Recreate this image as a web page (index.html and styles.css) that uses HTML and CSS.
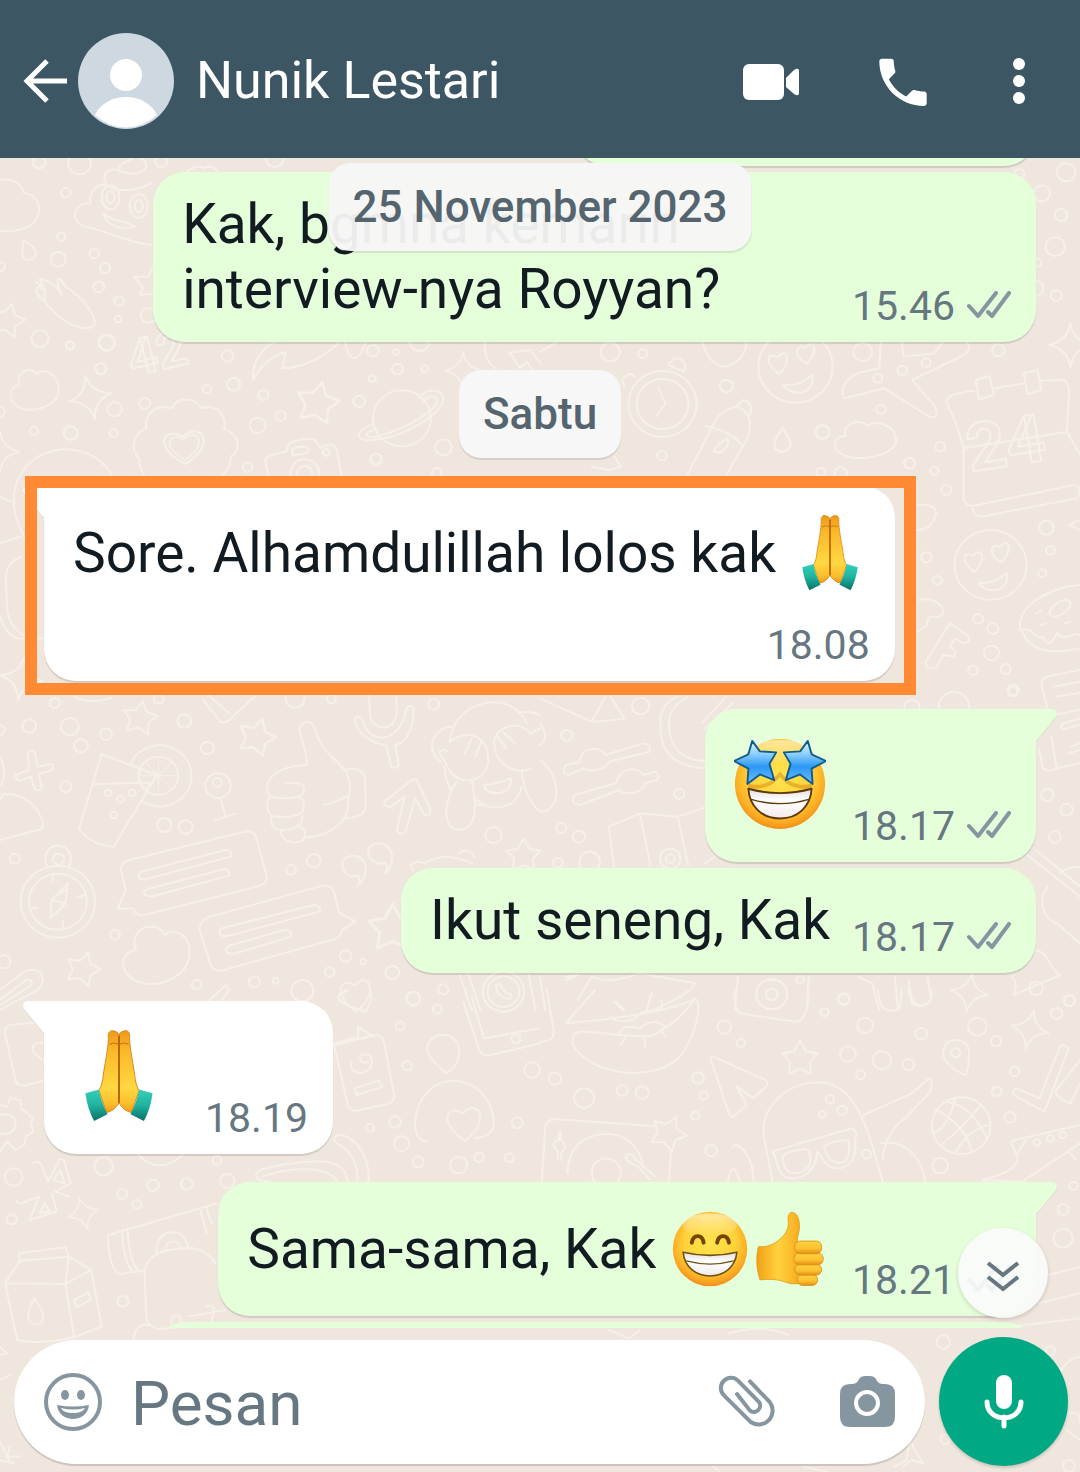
FILE: index.html
```html
<!DOCTYPE html>
<html lang="id">
<head>
    <meta charset="UTF-8">
    <meta name="viewport" content="width=device-width, initial-scale=1.0">
    <title>Nunik Lestari</title>
    <link rel="stylesheet" href="styles.css">
</head>
<body>

<!-- Wallpaper -->
<svg class="wallpaper" viewBox="0 0 1080 1472" preserveAspectRatio="xMinYMin slice" aria-hidden="true">
    <defs>
        <path id="star" d="M0-52L16-22 49-16 27 9 31 42 0 28-31 42-27 9-49-16-16-22Z"/>
        <path id="sparkle" d="M0-66Q8-12 62 0Q8 12 0 66Q-8 12-62 0Q-8-12 0-66Z"/>
        <path id="cloud" d="M-60 45C-100 35-105-15-62-18C-75-60-15-75 0-50C40-75 85-40 82 0C80 40-20 65-60 45Z"/>
        <path id="heart" d="M0 52C-85 0-55-62-5-30C35-78 85-10 0 52Z"/>
        <path id="drop" d="M0-32C22 0 24 10 18 20C8 34-10 34-18 20C-24 8-12-8 0-32Z"/>
        <g id="love-face">
            <circle r="108"/>
            <path d="M-48 22C-95-15-80-45-52-28C-30-60-5-20-48 22ZM34-8C-15-35 5-70 28-55C45-85 75-60 34-8ZM-36 55Q15 60 48 24Q56 70 15 78Q-20 80-36 55Z"/>
        </g>
    </defs>

    <g transform="scale(.3444 .3333)">
        <path d="M-20 690C40 700 100 690 112 640C120 600 90 580 70 580C60 540 20 530-20 545"/>
        <path d="M440 735C380 730 330 700 250 680C200 665 210 610 262 610C255 570 290 550 310 556C290 520 320 500 345 512C345 480 380 490 385 470M345 512C400 535 420 510 425 500C425 480 410 475 400 470M310 556C350 580 400 570 440 550M300 640C330 670 370 660 392 680C350 690 310 680 300 640Z"/>
        <ellipse cx="321" cy="592" rx="26" ry="36"/><ellipse cx="321" cy="592" rx="12" ry="18"/>
        <ellipse cx="403" cy="618" rx="26" ry="36"/><ellipse cx="403" cy="618" rx="12" ry="18"/>
        <path d="M130 905C90 870 105 850 130 870L105 845M130 870L115 838C140 840 160 850 180 885C155 835 170 820 190 860C240 890 290 960 270 980C230 1000 160 950 130 905Z"/>
        <path d="M450 785L430 830 390 830 415 865 405 885 450 880"/>
        <path d="M540 515Q580 490 590 505Q620 490 635 520"/>
        <use href="#star" transform="translate(22 962) rotate(15)"/>
        <use href="#drop" transform="translate(80 750) rotate(-20)"/>
        <circle cx="114" cy="487" r="18"/><circle cx="231" cy="490" r="33"/><circle cx="468" cy="485" r="17"/><circle cx="191" cy="578" r="14"/><circle cx="178" cy="710" r="12"/><circle cx="169" cy="778" r="22"/><circle cx="274" cy="761" r="14"/><circle cx="305" cy="804" r="15"/><circle cx="287" cy="861" r="16"/><circle cx="346" cy="903" r="14"/><circle cx="343" cy="957" r="10"/><circle cx="116" cy="1016" r="25"/><circle cx="203" cy="1036" r="12"/><circle cx="310" cy="1028" r="22"/><circle cx="431" cy="946" r="22"/><circle cx="0" cy="800" r="14"/><circle cx="798" cy="475" r="26"/>
    </g>

    <g transform="translate(540) scale(.3444 .3333)">
        <circle cx="1528" cy="517" r="27"/><circle cx="1457" cy="580" r="24"/><circle cx="1513" cy="645" r="18"/><circle cx="1496" cy="740" r="28"/><circle cx="1444" cy="788" r="12"/><circle cx="1440" cy="865" r="22"/><circle cx="1499" cy="887" r="16"/><circle cx="1392" cy="522" r="14"/>
    </g>

    <g transform="translate(0 340) scale(.3444 .3333)">
        <text class="doodle-number" x="385" y="110" transform="rotate(-14 385 110)">42</text>
        <use href="#cloud" transform="translate(105 155) scale(.8 1.05)"/>
        <use href="#sparkle" transform="translate(262 172) rotate(-12)"/>
        <use href="#sparkle" transform="translate(0 335) scale(.9)"/>
        <use href="#sparkle" transform="translate(1345 92) scale(.85)"/>
        <use href="#sparkle" transform="translate(62 1015) rotate(8)"/>
        <use href="#star" transform="translate(922 190) rotate(12) scale(1.25)"/>
        <path d="M735 120C730 50 780 0 830 0M735 120C760 70 790 50 830 35L820 85C880 85 950 50 1000-10M1000-10C1010 90 1050 60 1065-5"/>
        <path d="M500 205C515 165 570 175 585 205C640 190 660 240 650 265C700 290 700 330 670 350C670 390 650 400 640 410M500 205C440 190 420 230 425 265C380 280 380 340 405 355C400 385 415 395 420 410"/>
        <use href="#heart" transform="translate(538 320) scale(1.15 1)"/>
        <use href="#heart" transform="translate(538 320) scale(.85 .75)"/>
        <circle cx="1167" cy="235" r="84"/>
        <path d="M1085 250C1030 270 1020 310 1100 298C1180 290 1320 200 1280 160C1265 145 1230 150 1218 175M1085 270C1050 280 1060 300 1110 285C1180 265 1290 200 1265 172C1250 165 1240 170 1230 185"/>
        <path d="M780 410L770 360Q775 345 830 335L840 310Q880 290 915 300L930 325Q970 300 978 330L992 410M850 345C840 325 855 320 880 320C900 322 905 335 880 342Z"/>
        <circle cx="885" cy="400" r="42"/><circle cx="885" cy="400" r="22"/><circle cx="947" cy="337" r="10"/>
        <path d="M75 595C0 480 50 340 180 328C260 325 310 370 325 410M0 470L45 490M0 610L60 590M60 650C0 680 20 720 20 800C25 860 60 900 125 895M0 830C20 890 50 900 70 895"/>
        <path d="M1480 38L1540 30 1570 70M1480 38L1510 85 1530 65 1545 90M1410 0Q1400 60 1440 85"/>
        <circle cx="203" cy="17" r="12"/><circle cx="310" cy="8" r="24"/><circle cx="293" cy="86" r="16"/><circle cx="333" cy="208" r="21"/><circle cx="420" cy="190" r="16"/><circle cx="205" cy="279" r="20"/><circle cx="330" cy="279" r="12"/><circle cx="99" cy="273" r="12"/><circle cx="0" cy="215" r="14"/><circle cx="601" cy="147" r="12"/><circle cx="678" cy="133" r="19"/><circle cx="661" cy="48" r="17"/><circle cx="765" cy="165" r="15"/><circle cx="815" cy="228" r="15"/><circle cx="748" cy="256" r="23"/><circle cx="719" cy="382" r="14"/><circle cx="1043" cy="184" r="17"/><circle cx="1083" cy="32" r="17"/><circle cx="1151" cy="36" r="9"/><circle cx="1154" cy="87" r="16"/><circle cx="1081" cy="116" r="10"/><circle cx="1233" cy="86" r="10"/><circle cx="1288" cy="322" r="24"/><circle cx="1092" cy="357" r="16"/><circle cx="1268" cy="398" r="14"/><circle cx="1218" cy="5" r="28"/>
    </g>

    <g transform="translate(540 340) scale(.3444 .3333)">
        <circle cx="356" cy="192" r="99"/><circle cx="356" cy="192" r="75"/>
        <path d="M343 143L365 190 337 230M372 75Q400 35 423 75L418 95ZM275 110Q260 90 238 120L245 140"/>
        <use href="#love-face" transform="translate(742 80)"/>
        <use href="#love-face" transform="translate(1308 675) scale(.97)"/>
        <path d="M990 0L985 85L920 100C880 120 870 160 885 175L1000 145L1130 230C1165 240 1150 200 1140 190L1080 120L1230 45C1260 25 1240 0 1230 0M1050 0L1055 50 1145 40 1180-10"/>
        <path d="M425 410L500 260C520 210 580 175 605 230C625 290 580 320 540 410M480 258Q560 275 590 320M570 200L590 180Q620 185 610 225M505 335C510 310 540 300 545 295C550 320 530 345 505 335Z"/>
        <use href="#drop" transform="translate(703 300) scale(1.15)"/>
        <use href="#cloud" transform="translate(950 305) scale(1.02 .95)"/>
        <path d="M1180 180Q1190 160 1260 152M1320 145L1405 130M1455 122L1520 120Q1540 125 1535 180L1530 275 1230 325Q1215 260 1180 185M1230 325L1230 480Q1240 500 1260 497L1550 435Q1580 440 1560 475L1280 530Q1260 530 1255 505M1530 275L1568 345M1265 120L1305 108 1318 165 1275 178ZM1405 100L1445 90 1455 150 1415 163Z"/>
        <text class="doodle-number doodle-date" x="1250" y="395" transform="rotate(-9 1250 395)">24</text>
        <path d="M1568 735C1480 740 1380 800 1395 870C1440 860 1430 900 1460 890C1470 920 1490 910 1500 880C1530 910 1550 870 1568 885M1400 875C1420 930 1480 945 1568 925"/>
        <ellipse cx="1510" cy="805" rx="35" ry="18" transform="rotate(-35 1510 805)"/>
        <path d="M1465 765L1485 758M1440 820L1455 812M1455 855L1470 850M1525 850L1540 845"/>
        <path d="M1100 780C1150 770 1190 810 1160 830L1130 830 1120 860 1095 875M1190 850L1240 885Q1255 905 1230 910L1205 895 1190 920Q1215 935 1200 950L1170 945 1150 985Q1120 990 1120 965Z"/>
        <path d="M1568 990L1470 1010Q1450 1020 1460 1050L1475 1110M1490 1040L1568 1025M1500 1070L1568 1058M1095 495Q1150 490 1150 520Q1140 570 1095 570M1568 540L1535 555 1568 570"/>
        <use href="#sparkle" transform="translate(1540 15)"/>
        <path d="M470 0Q490 80 540 80Q600 60 600 0M0 35L60 0M150 380L200 390 235 380 215 350"/>
        <circle cx="204" cy="36" r="28"/><circle cx="298" cy="41" r="13"/><circle cx="541" cy="138" r="19"/><circle cx="354" cy="347" r="14"/><circle cx="937" cy="36" r="27"/><circle cx="990" cy="208" r="14"/><circle cx="820" cy="276" r="20"/><circle cx="1121" cy="68" r="13"/><circle cx="1052" cy="91" r="14"/><circle cx="981" cy="115" r="13"/><circle cx="1162" cy="320" r="14"/><circle cx="1073" cy="370" r="16"/><circle cx="1145" cy="393" r="12"/><circle cx="1180" cy="450" r="15"/><circle cx="1331" cy="31" r="18"/><circle cx="1470" cy="563" r="21"/><circle cx="1482" cy="631" r="13"/><circle cx="1458" cy="700" r="12"/><circle cx="1154" cy="721" r="13"/><circle cx="1122" cy="652" r="15"/><circle cx="1272" cy="836" r="14"/><circle cx="1315" cy="866" r="16"/><circle cx="1311" cy="939" r="22"/><circle cx="1352" cy="987" r="15"/><circle cx="1257" cy="991" r="14"/><circle cx="1374" cy="1050" r="16"/><circle cx="815" cy="396" r="13"/><circle cx="873" cy="400" r="18"/>
    </g>

    <g transform="translate(0 690) scale(.3444 .3333)">
        <use href="#star" transform="translate(406 85) rotate(10)"/>
        <use href="#star" transform="translate(745 142) rotate(18) scale(1.1)"/>
        <use href="#star" transform="translate(240 838) rotate(18)"/>
        <use href="#star" transform="translate(1140 715) scale(1.4)"/>
        <use href="#star" transform="translate(1520 498)"/>
        <path d="M45 255L85 240 80 190Q92 175 102 190L108 230 150 222Q160 232 148 242L112 252 122 295Q112 308 100 295L90 260 60 272Q45 268 45 255Z"/>
        <path d="M295 192L455 255 330 470Q260 465 230 415ZM270 282L445 278M380 220A92 92 0 1 1 410 332"/>
        <circle cx="460" cy="257" r="57"/>
        <path class="thin" d="M460 200V314M403 257H517M420 217L500 297M500 217L420 297"/>
        <circle cx="314" cy="309" r="10"/><circle cx="350" cy="327" r="10"/><circle cx="384" cy="309" r="10"/><circle cx="330" cy="375" r="10"/>
        <circle cx="633" cy="287" r="37"/><circle cx="631" cy="277" r="13"/>
        <path d="M640 324L655 378M625 390L683 371"/>
        <path d="M890 225C895 180 870 150 870 115C880 85 910 90 918 125C930 180 980 210 1005 245Q1025 290 1010 330C1020 380 970 440 885 442C880 465 815 465 815 420C785 420 785 390 790 378C770 360 775 330 785 320C760 290 780 230 890 225M785 320C830 330 885 325 882 300C885 275 860 280 830 280M790 378C830 385 885 380 882 350Q885 330 870 322M815 420C840 420 880 415 878 378M885 442Q890 415 870 412M1005 240Q1050 225 1060 265L1062 350Q1060 380 1005 385M940 345Q980 335 1010 318"/>
        <path d="M1070 0L1075 80C1085 125 1145 125 1152 70L1150 0M1030 85C1040 75 1050 80 1055 95C1070 160 1160 170 1180 55Q1190 40 1202 55C1200 120 1180 160 1147 165L1158 225Q1148 240 1135 228L1122 165C1070 160 1030 120 1030 85Z"/>
        <path d="M1210 270L1250 360Q1250 378 1232 375L1205 325 1178 425Q1160 440 1152 420L1175 320 1135 350Q1115 352 1115 335L1195 270Q1205 265 1210 270Z"/>
        <path d="M1305 155C1320 20 1490 0 1530 100M1310 110C1260 110 1230 180 1280 215M1305 155C1370 110 1420 150 1418 210C1415 270 1350 290 1310 250L1275 185Q1290 175 1300 185M1325 275C1280 350 1290 420 1335 420C1385 415 1385 350 1370 275M1435 150C1450 100 1520 95 1540 130L1568 115M1435 150C1430 220 1500 260 1540 235M1290 230Q1295 280 1310 300M1380 325C1420 370 1500 360 1515 290M1380 345L1400 345M1515 240C1520 300 1540 340 1568 365M1405 285Q1450 280 1483 265Q1485 305 1445 310Q1410 310 1405 285ZM1350 190L1370 145M1380 200L1400 150M1460 125L1495 160M1445 140L1470 175M1505 70Q1540 60 1568 75"/>
        <path d="M0 450L120 418Q130 405 120 385C100 330 50 310 10 312L0 330M0 200Q20 240 5 285"/>
        <circle cx="168" cy="635" r="108"/><circle cx="168" cy="635" r="84"/><circle cx="170" cy="507" r="16"/>
        <path d="M138 530C120 495 145 465 170 467C200 468 215 500 200 530M197 580L150 630 147 685 190 640ZM150 630L190 640M165 615L192 600M153 550V572M225 622L245 615M90 655L110 655M182 695L184 715"/>
        <path d="M350 535Q355 515 375 510L710 425Q740 420 745 445L775 560Q775 580 755 587L420 675Q395 680 387 655L342 657 365 600Z"/>
        <path d="M410 545L655 480Q675 480 670 500L425 567Q400 572 402 552ZM428 597L650 538Q670 540 665 557L445 618Q418 622 418 605Z"/>
        <path d="M580 720Q580 690 610 680L935 587Q960 583 970 605L985 668 1033 695 995 718Q990 740 970 748L650 840Q620 850 610 820Z"/>
        <path d="M645 715L910 645Q935 645 928 665L665 737Q635 745 638 722ZM663 768L825 720Q850 720 845 740L685 790Q655 795 655 778Z"/>
        <path d="M1035 590Q1050 580 1040 557C1000 570 980 520 1005 503C1050 480 1080 530 1050 575ZM1115 553Q1130 540 1120 520C1075 530 1055 480 1080 465C1120 445 1160 490 1125 545Z"/>
        <path d="M395 780C380 750 400 710 435 710C465 705 475 730 478 735C510 710 550 740 550 780C555 850 480 890 420 880C350 870 335 790 395 780Z"/>
        <path d="M0 900L75 842Q120 830 125 870Q120 895 100 905L0 960M0 930L75 870Q95 865 92 885L0 945M590 30L640 95Q660 105 680 75L740 20M600 10L665 70M215 20Q270 45 325 22"/>
        <use href="#heart" transform="translate(1035 915) scale(.85 .95)"/>
        <path d="M1335 855L1370 960M1360 852L1395 960M1535 855L1555 960M1200 540Q1180 520 1215 515L1235 520Q1290 480 1370 520M1330 490Q1360 470 1378 500M605 935L655 885 665 900 640 935"/>
        <circle cx="1462" cy="905" r="60"/><circle cx="1462" cy="905" r="46"/>
        <path d="M1440 885C1440 915 1465 930 1485 925L1483 912 1470 910 1455 890 1450 880Z"/>
        <circle cx="85" cy="108" r="20"/><circle cx="203" cy="110" r="26"/><circle cx="159" cy="39" r="15"/><circle cx="308" cy="133" r="17"/><circle cx="235" cy="167" r="20"/><circle cx="191" cy="290" r="16"/><circle cx="535" cy="93" r="20"/><circle cx="602" cy="174" r="19"/><circle cx="477" cy="405" r="21"/><circle cx="539" cy="411" r="20"/><circle cx="43" cy="506" r="15"/><circle cx="334" cy="734" r="14"/><circle cx="845" cy="539" r="14"/><circle cx="911" cy="512" r="20"/><circle cx="857" cy="25" r="28"/><circle cx="962" cy="27" r="13"/><circle cx="1259" cy="43" r="16"/><circle cx="1433" cy="435" r="24"/><circle cx="1004" cy="798" r="17"/><circle cx="1055" cy="815" r="8"/><circle cx="957" cy="846" r="14"/><circle cx="1139" cy="848" r="20"/><circle cx="739" cy="876" r="16"/><circle cx="571" cy="884" r="14"/><circle cx="800" cy="872" r="9"/><circle cx="878" cy="902" r="32"/><circle cx="1287" cy="898" r="15"/><circle cx="1200" cy="925" r="20"/><circle cx="10" cy="815" r="20"/><circle cx="0" cy="120" r="14"/><circle cx="461" cy="27" r="14"/>
    </g>

    <g transform="translate(540 690) scale(.3444 .3333)">
        <path d="M0 25L150 95Q200 95 245 85L205 20M150 95L190 20M350 105C345 60 370 30 400 20M350 105C345 190 400 235 485 235M375 105C370 60 400 40 430 20M375 105C375 180 420 215 485 212M470 100L540 20M480 115L560 40"/>
        <path d="M75 225L115 215C120 165 180 170 190 195L300 160Q325 165 318 185L200 215C190 245 140 245 125 235L85 255Q60 250 75 225ZM100 315L220 280C230 235 280 225 300 255L335 245Q350 255 340 270L305 280C295 315 245 315 230 300L115 345Q85 340 100 315Z"/>
        <path d="M0 100Q30 140 0 165M0 210C60 260 60 340 20 362L0 365M215 530L200 410 290 370 400 380 485 350M290 370L320 525M400 380L430 525"/>
        <circle cx="378" cy="506" r="30"/><circle cx="378" cy="506" r="13"/>
        <path d="M1568 85L1520 100Q1505 110 1520 118L1568 105M1490 75L1568 60M1450 180L1460 235Q1480 250 1500 235L1485 140M1540 170L1568 160M1535 190L1568 180M1500 235L1568 220"/>
        <path d="M1415 495L1568 620M1440 480L1568 590M1510 550Q1530 530 1568 530M1475 590C1450 620 1450 680 1500 700L1568 760M1440 780C1480 790 1480 840 1510 855L1375 915Q1390 880 1370 860"/>
        <path d="M75 860L110 855 75 870M110 930L150 860Q200 885 290 850L450 880Q440 910 330 960M215 935L245 960M325 910L310 960M575 860L565 960M780 860L775 960M925 860L965 880 985 960M1030 860L1040 960M1070 870L1080 940Q1110 960 1135 930L1125 860"/>
        <circle cx="673" cy="913" r="45"/><circle cx="673" cy="913" r="17"/>
        <use href="#sparkle" transform="translate(1247 908) rotate(8) scale(.9)"/>
        <path d="M480 520L520 490M0 860L15 960"/>
        <circle cx="292" cy="48" r="25"/><circle cx="78" cy="136" r="16"/><circle cx="404" cy="311" r="15"/><circle cx="62" cy="414" r="15"/><circle cx="113" cy="440" r="18"/><circle cx="52" cy="518" r="14"/><circle cx="144" cy="515" r="30"/><circle cx="1473" cy="315" r="18"/><circle cx="1529" cy="359" r="18"/><circle cx="1495" cy="441" r="17"/><circle cx="755" cy="869" r="11"/><circle cx="882" cy="928" r="16"/><circle cx="1537" cy="932" r="16"/><circle cx="1440" cy="895" r="20"/><circle cx="1202" cy="50" r="44"/><circle cx="1080" cy="52" r="22"/><circle cx="1373" cy="5" r="14"/>
    </g>

    <g transform="translate(0 990) scale(.3444 .3333)">
        <path d="M125 95L30 105Q10 110 15 135L45 270Q50 292 80 285L130 270M125 160Q90 155 95 185L130 215"/>
        <path d="M0 345L20 350 30 325 60 330 60 355 80 370 95 385 90 405 97 425 75 440 70 465 45 480 20 455 0 485"/>
        <path d="M0 375Q45 365 45 405Q40 435 0 432M1040 140L1040 110 1085 140"/>
        <path d="M97 520Q110 508 120 525L140 575 172 510Q180 500 187 515L205 580 160 605 200 620M50 630Q45 640 60 640L115 620 85 690 165 665 150 610M130 640L145 665 115 670ZM175 540L188 580 155 570Z"/>
        <use href="#sparkle" transform="translate(242 670) rotate(-15) scale(.75)"/>
        <path d="M315 735L630 640M315 735C310 780 325 840 345 852L420 842M355 720C355 780 370 830 385 845M370 715C370 770 385 825 400 840M580 655Q590 690 600 730M600 650Q605 680 615 700M455 795C450 740 480 725 505 727C530 728 545 750 545 775M480 780C480 750 520 745 525 775"/>
        <path d="M420 842C430 780 500 775 560 775Q600 780 625 820M420 842L425 985Q430 1010 460 1018L620 1000M498 1005Q495 975 515 975Q530 980 520 1010M545 980L655 960M600 950Q620 940 622 965L612 1000M430 1005Q395 1000 388 1045"/>
        <path d="M55 790L190 772 200 800 58 812ZM58 812L15 880 190 882 200 800 265 840 295 1010 215 1042 190 882 265 840M15 880L50 1050Q120 1065 215 1042M100 925C75 970 75 1000 105 1003C135 1000 130 970 100 925ZM215 930L258 907 262 930 222 952Z"/>
        <path d="M755 540C800 525 900 510 950 515C1000 525 1010 560 1008 575M755 540C730 560 750 575 780 573M760 560C850 530 950 525 980 575M985 435C960 440 970 455 985 465C1030 490 1040 540 1038 575M985 435C1040 440 1075 510 1070 575M400 492Q460 560 535 492"/>
        <path d="M970 165L1090 135Q1110 135 1115 155L1145 320Q1145 335 1125 342L1030 363Q1015 360 1010 345ZM970 160L1040 140M1030 295L1100 272 1110 290 1035 315ZM1020 215C1010 260 1080 260 1080 215C1080 190 1050 185 1045 205Q1050 225 1070 215"/>
        <path d="M1295 250C1270 225 1240 200 1240 175C1245 120 1330 120 1333 180C1335 210 1320 235 1295 250ZM1240 455Q1205 450 1205 400C1215 230 1420 230 1435 400Q1430 440 1380 445"/>
        <use href="#heart" transform="translate(1350 400) scale(.95 1)"/>
        <path d="M1345 35L1390 175Q1395 200 1425 195L1568 160M1370 20L1405 145M1405 145L1568 115"/>
        <path d="M1010 0C960 20 980 40 1060 65Q1085 30 1075 5M0 1070L20 1090 0 1095M0 1170L30 1155M0 1355L25 1410M30 1370L20 1400 60 1400M0 1410L40 1420"/>
        <circle cx="40" cy="561" r="26"/><circle cx="301" cy="529" r="27"/><circle cx="34" cy="688" r="15"/><circle cx="355" cy="612" r="15"/><circle cx="398" cy="643" r="13"/><circle cx="444" cy="586" r="17"/><circle cx="543" cy="582" r="17"/><circle cx="630" cy="511" r="13"/><circle cx="660" cy="573" r="21"/><circle cx="357" cy="934" r="16"/><circle cx="1200" cy="26" r="20"/><circle cx="1270" cy="57" r="13"/><circle cx="1162" cy="108" r="13"/><circle cx="1182" cy="227" r="14"/><circle cx="1074" cy="413" r="12"/><circle cx="1147" cy="396" r="17"/><circle cx="1166" cy="461" r="22"/><circle cx="1214" cy="515" r="16"/><circle cx="1332" cy="525" r="25"/><circle cx="1391" cy="502" r="14"/><circle cx="1479" cy="503" r="13"/><circle cx="1502" cy="398" r="16"/><circle cx="1498" cy="146" r="13"/><circle cx="1545" cy="240" r="23"/>
    </g>

    <g transform="translate(540 990) scale(.3444 .3333)">
        <path d="M75 100L160 0M75 100C200 90 400 60 450 25C470 40 460 120 410 195C340 280 150 260 95 165Q90 120 130 125C180 125 230 140 320 138C370 120 420 70 450 25M205 80Q215 100 270 90Q290 60 350 60Q360 40 350 30M220 35L240 60M320 15L315 45M230 130Q240 100 290 115Q330 80 365 110L350 120M250 140L235 165M303 140L305 170M350 120L365 140"/>
        <path d="M565 0Q560 70 590 72L740 95Q780 95 780 0"/>
        <circle cx="673" cy="13" r="45"/><circle cx="673" cy="13" r="17"/>
        <path d="M980 0L990 45Q1010 75 1045 55L1050 0M1070 0Q1080 50 1115 45Q1145 35 1135 0M0 155Q40 155 40 125L20 0"/>
        <use href="#star" transform="translate(755 207) scale(1.05)"/>
        <use href="#star" transform="translate(372 430) rotate(25) scale(1.05)"/>
        <use href="#sparkle" transform="translate(1422 118) rotate(12) scale(.9)"/>
        <path d="M495 205Q500 195 510 203L655 270Q665 280 655 290L620 325 570 288 600 345 560 382Q550 380 545 360Z"/>
        <path d="M675 575L650 440C640 340 730 270 820 277C920 290 950 410 995 575M940 375L1080 310 1130 265Q1145 270 1130 310L1060 385Q1000 430 995 510M990 460C1060 450 1110 500 1118 575M675 485L905 415Q925 420 915 450C920 510 900 530 870 535C830 540 820 500 805 485C800 560 740 575 710 560C685 540 690 505 675 485Z"/>
        <path d="M705 500Q710 485 770 477Q795 490 780 530Q750 560 720 545Q705 530 705 500ZM825 470Q850 450 895 450Q905 490 885 515Q840 530 825 470Z"/>
        <circle cx="842" cy="328" r="12"/><circle cx="877" cy="361" r="14"/><circle cx="820" cy="373" r="10"/>
        <path d="M1237 255Q1250 200 1245 175C1230 140 1175 140 1170 185C1170 210 1195 240 1237 255"/>
        <circle cx="1207" cy="188" r="13"/>
        <circle cx="1223" cy="407" r="85"/>
        <path d="M1150 360Q1230 400 1255 485M1175 335Q1250 340 1295 440M1165 465Q1220 420 1280 345M1205 488Q1250 410 1307 405M1145 430Q1190 400 1205 325"/>
        <path d="M1385 295L1450 325 1510 170Q1520 160 1535 175L1465 365 1375 315Q1370 300 1385 295ZM1568 210L1500 300Q1490 320 1540 340L1568 280"/>
        <path d="M1370 465Q1360 455 1380 450L1568 405M1370 465L1385 495 1410 450M1385 495Q1400 540 1285 570L1400 575 1568 460M1535 485L1555 510"/>
        <path d="M5 575L15 410Q20 385 50 388L330 408M80 550C80 470 130 430 200 432C250 435 290 470 300 530M150 548A42 42 0 0 1 235 548A42 42 0 0 1 150 548M55 425V450Q38 452 40 470L52 485V510M60 425V450Q75 460 72 475L62 490V510M250 495Q265 485 280 510L335 560M250 495Q245 515 285 530L320 570M380 480L375 575M560 470C575 450 620 500 620 570M545 575Q560 500 580 575"/>
        <path d="M1440 865L1568 830M1450 940L1568 910M1370 1010L1568 985M200 1020L260 1045 290 1020M550 1030Q640 1000 720 1035"/>
        <circle cx="882" cy="27" r="17"/><circle cx="826" cy="67" r="12"/><circle cx="535" cy="111" r="20"/><circle cx="583" cy="159" r="12"/><circle cx="944" cy="106" r="23"/><circle cx="1107" cy="131" r="17"/><circle cx="894" cy="192" r="23"/><circle cx="993" cy="211" r="27"/><circle cx="1070" cy="224" r="17"/><circle cx="931" cy="254" r="13"/><circle cx="1270" cy="110" r="27"/><circle cx="1324" cy="153" r="15"/><circle cx="1500" cy="70" r="16"/><circle cx="1537" cy="32" r="16"/><circle cx="1378" cy="244" r="14"/><circle cx="1326" cy="304" r="14"/><circle cx="1365" cy="382" r="16"/><circle cx="459" cy="264" r="17"/><circle cx="475" cy="317" r="12"/><circle cx="451" cy="377" r="12"/><circle cx="43" cy="266" r="18"/><circle cx="128" cy="324" r="29"/><circle cx="239" cy="301" r="16"/><circle cx="297" cy="308" r="19"/><circle cx="497" cy="482" r="17"/><circle cx="1162" cy="527" r="23"/><circle cx="948" cy="492" r="13"/><circle cx="1443" cy="457" r="10"/><circle cx="1482" cy="445" r="10"/><circle cx="1518" cy="435" r="10"/><circle cx="1549" cy="588" r="12"/><circle cx="1519" cy="658" r="16"/><circle cx="1519" cy="745" r="28"/>
    </g>

    <g transform="translate(640 1170) scale(.3333)">
        <path d="M765 890L800 870 810 810 830 850 850 880 815 870 790 890M1290 730Q1320 720 1320 760M1240 640Q1280 560 1320 560M220 890L240 906M490 890L560 906M1280 780L1320 810"/>
        <circle cx="910" cy="516" r="20"/><circle cx="1231" cy="543" r="14"/><circle cx="915" cy="808" r="14"/><circle cx="1287" cy="888" r="18"/>
    </g>
</svg>

<!-- Shared drawings -->
<svg class="sprite" aria-hidden="true">
    <defs>
        <linearGradient id="handFill" x1="0" y1="0" x2="0" y2="1">
            <stop offset="0" stop-color="#ee9a1c"/>
            <stop offset=".25" stop-color="#fab92a"/>
            <stop offset=".7" stop-color="#ffd842"/>
            <stop offset=".9" stop-color="#fbbd2c"/>
            <stop offset="1" stop-color="#f19a13"/>
        </linearGradient>
        <linearGradient id="cuffFill" x1="0" y1="0" x2="0" y2="1">
            <stop offset="0" stop-color="#35d0b8"/>
            <stop offset=".5" stop-color="#1fb3a0"/>
            <stop offset="1" stop-color="#087066"/>
        </linearGradient>
        <radialGradient id="faceFill" cx=".5" cy=".42" r=".58">
            <stop offset="0" stop-color="#ffe44e"/>
            <stop offset=".6" stop-color="#ffd23a"/>
            <stop offset=".85" stop-color="#fdae24"/>
            <stop offset="1" stop-color="#f0901a"/>
        </radialGradient>
        <linearGradient id="faceShine" x1="0" y1="0" x2="0" y2="1">
            <stop offset="0" stop-color="#fff6cf" stop-opacity=".7"/>
            <stop offset="1" stop-color="#fff6cf" stop-opacity="0"/>
        </linearGradient>
        <linearGradient id="starFill" x1="0" y1="0" x2="0" y2="1">
            <stop offset="0" stop-color="#e2f5ff"/>
            <stop offset=".3" stop-color="#8fd0fb"/>
            <stop offset=".6" stop-color="#2b98f5"/>
            <stop offset="1" stop-color="#70c0fa"/>
        </linearGradient>
        <linearGradient id="teethFill" x1="0" y1="0" x2="0" y2="1">
            <stop offset="0" stop-color="#e6dcdc"/>
            <stop offset=".4" stop-color="#ffffff"/>
            <stop offset="1" stop-color="#f3eaea"/>
        </linearGradient>
        <linearGradient id="thumbFill" x1="0" y1="0" x2="1" y2="0">
            <stop offset="0" stop-color="#f0a01a"/>
            <stop offset=".25" stop-color="#f9b929"/>
            <stop offset=".5" stop-color="#ffd23d"/>
            <stop offset="1" stop-color="#f6ad20"/>
        </linearGradient>
        <linearGradient id="fingerFill" x1="0" y1="0" x2="0" y2="1">
            <stop offset="0" stop-color="#ffd43f"/>
            <stop offset=".6" stop-color="#fcc030"/>
            <stop offset="1" stop-color="#e58f14"/>
        </linearGradient>
    </defs>

    <symbol id="pray" viewBox="0 0 96 96">
        <g id="prayHalf">
            <path d="M37 9C36 2 39 0 43 1Q47 2 48 5V76C45 81 41 85 35 86L27 63C29 60 30 57 31 52C32 40 36 26 37 9Z" fill="url(#handFill)" stroke="#d98512"/>
            <path d="M38 15Q42 12 48 15" fill="none" stroke="#c8690a"/>
            <path d="M13 66L27 62Q29 74 36 88L22 95Q15 82 13 66Z" fill="url(#cuffFill)"/>
        </g>
        <use href="#prayHalf" transform="translate(96) scale(-1 1)"/>
        <path d="M48 6V76" stroke="#b9660d" stroke-width="2"/>
    </symbol>

    <symbol id="starEyes" viewBox="0 0 96 96">
        <circle cx="48" cy="48" r="47" fill="url(#faceFill)"/>
        <ellipse cx="48" cy="15" rx="32" ry="13" fill="url(#faceShine)"/>
        <path d="M15 50Q28 53 40 46L48 38 56 46Q68 53 81 50" fill="none" stroke="#c97408" stroke-width="4" opacity=".4"/>
        <path id="starEye" d="M19 3L27 14 44 15 37 27 42 44 27 38 14 48 15 32 0 24 15 17Z" fill="url(#starFill)" stroke="#0f5d8f" stroke-width="2" stroke-linejoin="round"/>
        <use href="#starEye" transform="translate(96) scale(-1 1)"/>
        <path d="M15 53Q48 62 81 53C80 71 67 84 48 84S16 71 15 53Z" fill="url(#teethFill)" stroke="#5d3a0a" stroke-width="2" stroke-linejoin="round"/>
        <path d="M18 64Q48 73 78 64" fill="none" stroke="#5d3a0a" stroke-width="1.5"/>
    </symbol>

    <symbol id="grin" viewBox="0 0 96 96">
        <circle cx="48" cy="48" r="47" fill="url(#faceFill)"/>
        <ellipse cx="48" cy="18" rx="34" ry="15" fill="url(#faceShine)"/>
        <path d="M25 40C27 29 38 29 40 40M57 40C59 29 70 29 72 40" fill="none" stroke="#754407" stroke-width="5" stroke-linecap="round"/>
        <path d="M14 52Q48 60 82 52C80 71 66 82 48 82S16 71 14 52Z" fill="url(#teethFill)" stroke="#6b5410" stroke-width="2" stroke-linejoin="round"/>
        <path d="M18 63Q48 71 78 63" fill="none" stroke="#6b5410" stroke-width="1.5"/>
    </symbol>

    <symbol id="thumb" viewBox="0 0 96 96">
        <path d="M8 45Q18 46 26 42C36 36 46 28 46 15C44 4 48 1 52 2C59 4 60 14 60 20C60 28 56 34 58 40V92Q48 93 40 89Q28 85 10 87Q3 66 8 45Z" fill="url(#thumbFill)" stroke="#e39a1b"/>
        <g fill="url(#fingerFill)" stroke="#d98a14">
            <rect x="57" y="80" width="26" height="14" rx="7"/>
            <rect x="54" y="67" width="34" height="14" rx="7"/>
            <rect x="53" y="53" width="37" height="15" rx="7"/>
            <rect x="54" y="38" width="34" height="16" rx="7"/>
        </g>
    </symbol>

    <symbol id="ticks" viewBox="0 0 44 30">
        <path d="M2 15L11 25 29 2M21 21L25 25 42 2" fill="none" stroke="currentColor" stroke-width="4" stroke-linecap="round" stroke-linejoin="round"/>
    </symbol>

    <symbol id="tail" viewBox="0 0 21 32">
        <path d="M0 0H16Q23 1 20 8L1 31H0Z" fill="currentColor"/>
    </symbol>
</svg>

<header class="header">
    <button class="icon-button" aria-label="Kembali">
        <svg width="44" height="44" viewBox="0 0 44 44" fill="none" stroke="currentColor" stroke-width="5"><path d="M24 2L4 22 24 42M4 22H44"/></svg>
    </button>
    <svg class="avatar" viewBox="0 0 96 96" aria-hidden="true">
        <circle cx="48" cy="48" r="48" fill="#ced8e1"/>
        <circle cx="48" cy="42" r="16" fill="#fff"/>
        <path d="M17 82C22 71 34 64 48 64S74 71 79 82A45 45 0 0 1 17 82Z" fill="#fff"/>
    </svg>
    <h1 class="name">Nunik Lestari</h1>
    <div class="actions">
        <button class="icon-button" aria-label="Panggilan video">
            <svg width="56" height="48" viewBox="0 0 56 48" fill="currentColor"><rect y="7" width="41" height="36" rx="6"/><path d="M43 21L51 13Q56 10 56 14V36Q56 40 51 37L43 30Z"/></svg>
        </button>
        <button class="icon-button phone" aria-label="Panggilan suara">
            <svg width="48" height="50" viewBox="3 2 18 19" fill="currentColor"><path d="M6.62 10.79c1.44 2.83 3.76 5.14 6.59 6.59l2.2-2.2c.27-.27.67-.36 1.02-.24 1.12.37 2.33.57 3.57.57.55 0 1 .45 1 1V20c0 .55-.45 1-1 1-9.39 0-17-7.61-17-17 0-.55.45-1 1-1h3.5c.55 0 1 .45 1 1 0 1.25.2 2.45.57 3.57.11.35.03.74-.25 1.02l-2.2 2.2z"/></svg>
        </button>
        <button class="icon-button" aria-label="Menu">
            <svg width="24" height="48" viewBox="0 0 24 48" fill="currentColor"><circle cx="12" cy="7" r="6"/><circle cx="12" cy="24" r="6"/><circle cx="12" cy="41" r="6"/></svg>
        </button>
    </div>
</header>

<main class="chat">
    <div class="messages">
        <div class="bubble sent edge-top"></div>

        <div class="bubble sent">
            <p class="text">Kak, bgmna kemarin interview-nya Royyan?</p>
            <span class="meta"><time>15.46</time><svg class="ticks"><use href="#ticks"/></svg></span>
        </div>

        <div class="date">Sabtu</div>

        <div class="bubble received stacked first highlighted">
            <svg class="tail"><use href="#tail"/></svg>
            <p class="text">Sore. Alhamdulillah lolos kak <svg class="emoji" role="img" aria-label="🙏"><use href="#pray"/></svg></p>
            <span class="meta"><time>18.08</time></span>
        </div>

        <div class="bubble sent first">
            <svg class="tail"><use href="#tail"/></svg>
            <svg class="emoji-large" role="img" aria-label="🤩"><use href="#starEyes"/></svg>
            <span class="meta"><time>18.17</time><svg class="ticks"><use href="#ticks"/></svg></span>
        </div>

        <div class="bubble sent">
            <p class="text">Ikut seneng, Kak</p>
            <span class="meta"><time>18.17</time><svg class="ticks"><use href="#ticks"/></svg></span>
        </div>

        <div class="bubble received first">
            <svg class="tail"><use href="#tail"/></svg>
            <svg class="emoji-large" role="img" aria-label="🙏"><use href="#pray"/></svg>
            <span class="meta"><time>18.19</time></span>
        </div>

        <div class="bubble sent first">
            <svg class="tail"><use href="#tail"/></svg>
            <p class="text">Sama-sama, Kak <svg class="emoji" role="img" aria-label="😁"><use href="#grin"/></svg><svg class="emoji" role="img" aria-label="👍"><use href="#thumb"/></svg></p>
            <span class="meta"><time>18.21</time><svg class="ticks"><use href="#ticks"/></svg></span>
        </div>

        <div class="bubble sent edge-bottom"></div>
    </div>

    <div class="date floating-date">25 November 2023</div>

    <button class="scroll-down" aria-label="Ke pesan terbaru">
        <svg width="32" height="32" viewBox="0 0 32 32" fill="none" stroke="currentColor" stroke-width="4"><path d="M1 3L16 15 31 3M1 17L16 29 31 17"/></svg>
    </button>
</main>

<form class="composer">
    <div class="field">
        <button type="button" class="icon-button" aria-label="Emoji">
            <svg width="60" height="60" viewBox="0 0 60 60" fill="currentColor"><circle cx="30" cy="30" r="27" fill="none" stroke="currentColor" stroke-width="4"/><ellipse cx="22" cy="23" rx="4" ry="5"/><ellipse cx="38" cy="23" rx="4" ry="5"/><path d="M14 33Q30 36 46 33C45 42 38 47 30 47S15 42 14 33Z"/><path d="M18 36Q30 39 42 36Q40 41 30 41T18 36Z" fill="#fff"/></svg>
        </button>
        <input class="message-input" type="text" placeholder="Pesan" aria-label="Pesan">
        <button type="button" class="icon-button" aria-label="Lampirkan">
            <svg width="60" height="54" viewBox="230 615 180 162" fill="none" stroke="currentColor" stroke-width="12" stroke-linecap="round"><path d="M326 634L386 697A42 42 0 0 1 328 756L248 676A30 30 0 0 1 290 632L353 696A19 19 0 0 1 326 722L287 672"/></svg>
        </button>
        <button type="button" class="icon-button camera" aria-label="Kamera">
            <svg width="55" height="52" viewBox="0 0 55 52" fill="currentColor"><path d="M10 8H13Q16 8 18 5L19 3Q21 0 25 0H30Q34 0 36 3L37 5Q39 8 42 8H45Q55 8 55 18V41Q55 51 45 51H10Q0 51 0 41V18Q0 8 10 8Z"/><circle cx="27" cy="27" r="11" fill="none" stroke="#fff" stroke-width="4"/></svg>
        </button>
    </div>
    <button type="button" class="mic-button" aria-label="Pesan suara">
        <svg width="40" height="56" viewBox="0 0 40 56" fill="none" stroke="currentColor" stroke-width="5"><rect x="12" y="1" width="16" height="34" rx="8" fill="currentColor" stroke="none"/><path d="M3 28C3 49 37 49 37 28M20 43V52" stroke-linecap="round"/></svg>
    </button>
</form>

</body>
</html>
```
FILE: styles.css
```css
* {
    box-sizing: border-box;
}

body {
    position: relative;
    display: flex;
    flex-direction: column;
    height: 100vh;
    margin: 0;
    overflow: hidden;
    background-color: #efe6dd;
    font-family: Roboto, "Noto Sans", sans-serif;
    color: #111b21;
}

button {
    padding: 0;
    border: none;
    background: none;
    color: inherit;
    cursor: pointer;
}

svg {
    display: block;
}

.wallpaper {
    position: absolute;
    top: 0;
    left: 0;
    width: 100%;
    height: 100%;
    z-index: -1;
    fill: none;
    stroke: #f7f0ea;
    stroke-width: 6;
    stroke-linecap: round;
    stroke-linejoin: round;
}

.thin {
    stroke-width: 3;
}

.doodle-number {
    font-size: 150px;
    font-weight: bold;
}

.doodle-date {
    font-size: 200px;
}

.sprite {
    position: absolute;
    width: 0;
    height: 0;
}

/* Header */
.header {
    display: flex;
    flex: none;
    align-items: center;
    height: 158px;
    padding: 4px 49px 0 23px;
    background-color: #3c5664;
    color: white;
}

.avatar {
    flex: none;
    width: 96px;
    height: 96px;
    margin: 0 22px 0 11px;
}

.name {
    margin: 0;
    font-size: 52px;
    font-weight: normal;
    line-height: 64px;
}

.actions {
    display: flex;
    align-items: center;
    gap: 76px;
    margin-left: auto;
}

.phone {
    padding: 0 4px;
}

.icon-button {
    flex: none;
}

/* Conversation */
.chat {
    position: relative;
    flex: 1;
    min-height: 0;
    overflow: hidden;
}

.messages {
    display: flex;
    flex-direction: column;
    padding: 0 44px;
}

.bubble {
    position: relative;
    display: flex;
    flex: none;
    align-items: flex-end;
    max-width: 89%;
    margin-top: 6px;
    padding: 20px 25px 20px 29px;
    border-radius: 32px;
    box-shadow: 0 2px 1px rgba(0, 0, 0, 0.12);
}

.sent {
    align-self: flex-end;
    background-color: #e5ffda;
    --bubble: #e5ffda;
}

.received {
    align-self: flex-start;
    min-width: 289px;
    background-color: white;
    --bubble: white;
}

.first {
    margin-top: 28px;
}

.sent.first {
    border-top-right-radius: 0;
}

.received.first {
    border-top-left-radius: 0;
}

.edge-top {
    width: 461px;
    height: 106px;
    margin-top: -98px;
}

.edge-bottom {
    width: 882px;
    height: 106px;
}

.stacked {
    flex-direction: column;
    align-items: stretch;
}

.tail {
    position: absolute;
    top: 0;
    left: 100%;
    width: 21px;
    height: 32px;
    color: var(--bubble);
    filter: drop-shadow(0 1px 0 rgba(0, 0, 0, 0.08));
}

.received .tail {
    right: 100%;
    left: auto;
    transform: scaleX(-1);
}

.highlighted::after {
    content: "";
    position: absolute;
    inset: -10px -21px -14px -19px;
    border: 12px solid #ff8a33;
}

.text {
    margin: 0;
    font-size: 55px;
    line-height: 65px;
}

.emoji {
    display: inline-block;
    width: 76px;
    height: 76px;
    margin: 9px 2px;
    vertical-align: -28px;
}

.emoji-large {
    flex: none;
    width: 92px;
    height: 92px;
    margin: 9px 4px 12px 0;
}

.meta {
    display: flex;
    align-items: center;
    gap: 12px;
    margin: 0 0 -9px auto;
    padding-left: 22px;
    font-size: 41px;
    line-height: 50px;
    color: #667781;
}

.stacked .meta {
    margin-top: 20px;
}

.ticks {
    width: 44px;
    height: 30px;
    color: #8696a0;
}

.date {
    align-self: center;
    margin-top: 28px;
    padding: 12px 24px;
    border-radius: 22px;
    background-color: #f6f7f6;
    box-shadow: 0 2px 1px rgba(0, 0, 0, 0.1);
    font-size: 44px;
    font-weight: 500;
    line-height: 64px;
    color: #54656f;
}

.floating-date {
    position: absolute;
    top: 5px;
    left: 50%;
    margin: 0;
    transform: translateX(-50%);
    background-color: rgba(247, 247, 247, 0.95);
    white-space: nowrap;
}

.scroll-down {
    position: absolute;
    right: 32px;
    bottom: 10px;
    display: grid;
    place-items: center;
    width: 90px;
    height: 90px;
    padding-top: 6px;
    border-radius: 50%;
    background-color: rgba(250, 251, 250, 0.92);
    box-shadow: 0 2px 4px rgba(0, 0, 0, 0.15);
    color: #667781;
}

/* Composer */
.composer {
    display: flex;
    flex: none;
    align-items: center;
    gap: 14px;
    padding: 9px 12px 6px 14px;
}

.field {
    display: flex;
    flex: 1;
    align-items: center;
    min-width: 0;
    height: 124px;
    padding: 0 30px 0 29px;
    border-radius: 62px;
    background-color: white;
    box-shadow: 0 2px 1px rgba(0, 0, 0, 0.15);
    color: #8696a0;
}

.message-input {
    flex: 1;
    min-width: 0;
    margin: 0 24px 0 28px;
    padding: 4px 0 0;
    border: none;
    outline: none;
    background: none;
    font-family: inherit;
    font-size: 62px;
    color: #111b21;
}

.message-input::placeholder {
    color: #667781;
    opacity: 1;
}

.camera {
    margin-left: 62px;
}

.mic-button {
    display: grid;
    flex: none;
    place-items: center;
    width: 129px;
    height: 129px;
    border-radius: 50%;
    background-color: #00a884;
    box-shadow: 0 2px 3px rgba(0, 0, 0, 0.15);
    color: white;
}
```
